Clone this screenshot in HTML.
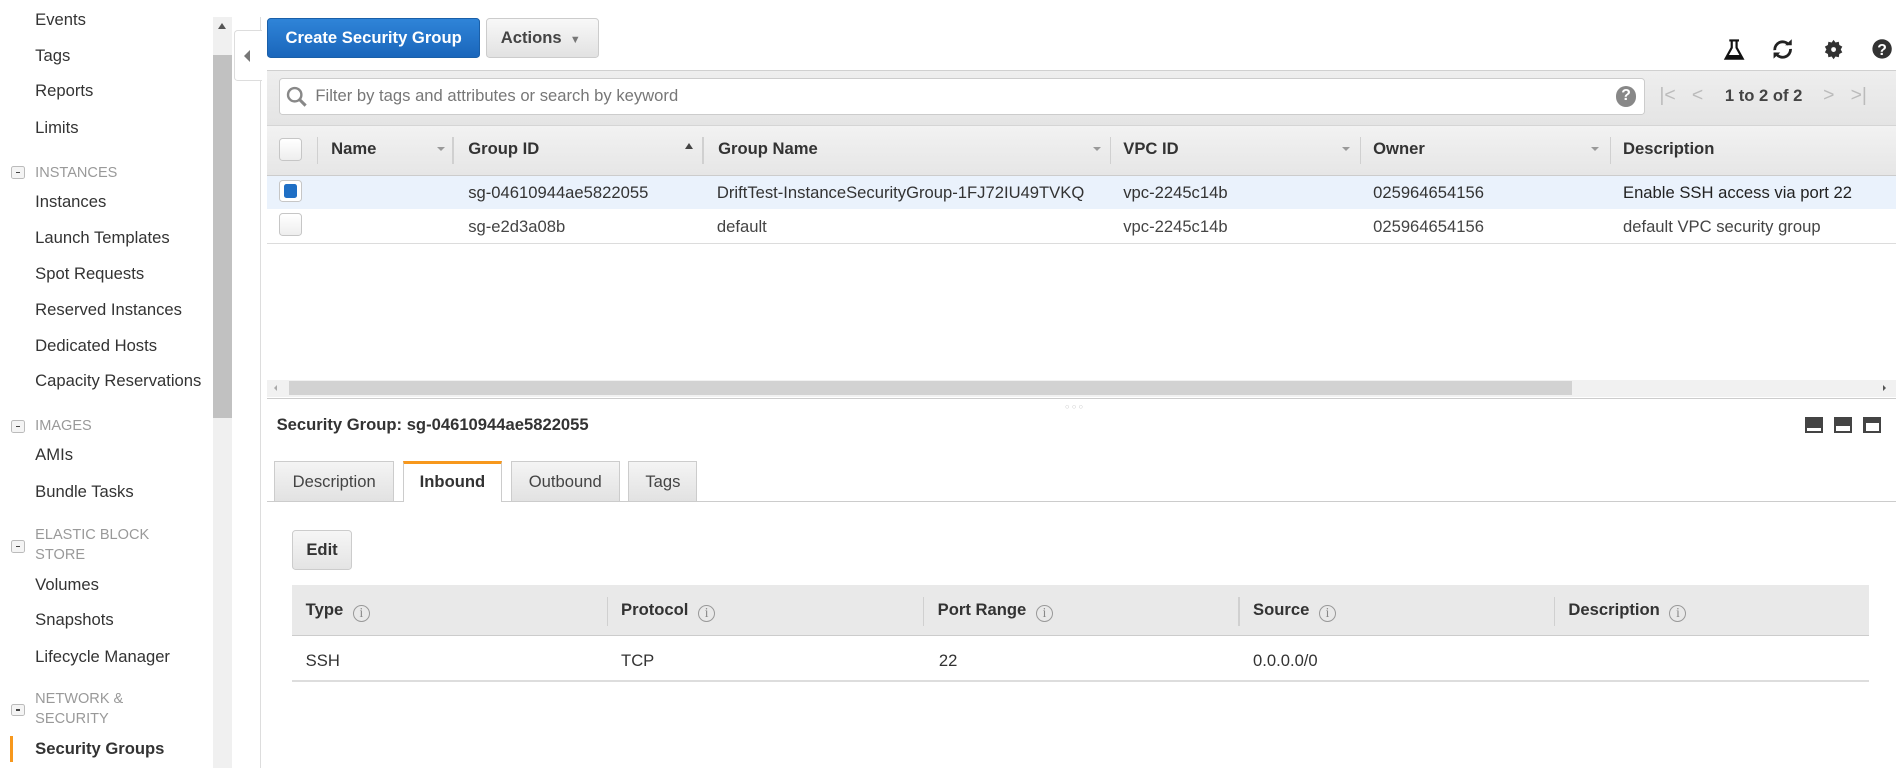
<!DOCTYPE html>
<html><head><meta charset="utf-8"><style>
html,body{margin:0;padding:0;background:#fff;overflow:hidden;width:1902px;height:768px}
#w{zoom:1.213;position:relative;width:1568px;height:633px;font-family:"Liberation Sans",Arial,sans-serif;color:#333;font-size:13.7px}
.a{position:absolute;white-space:nowrap}
.si{left:29px;font-size:13.7px;color:#333}
.sh{left:29px;font-size:12px;color:#999;line-height:16px}
.mb{position:absolute;left:9px;width:10px;height:9px;border:1px solid #bbb;border-radius:2px;background:#f4f4f4}
.mb:after{content:"";position:absolute;left:3px;top:4px;width:4px;height:1px;background:#444}
.hd{font-weight:bold;color:#333;font-size:13.7px}
.sep{position:absolute;width:1px;height:22px;background:#d0d0d0;top:113px}
.dd{position:absolute;top:121px;width:0;height:0;border-left:4px solid transparent;border-right:4px solid transparent;border-top:4px solid #999}
.cb{position:absolute;width:17px;height:17px;border:1px solid #c6c6c6;border-radius:3px;background:linear-gradient(#fff,#eee)}
.tab{position:absolute;top:380px;height:33px;line-height:33px;text-align:center;background:linear-gradient(#f4f4f4,#e2e2e2);border:1px solid #ccc;border-bottom:none;box-sizing:border-box;color:#444}
.info{display:inline-block;width:14px;height:14px;border:1.5px solid #999;border-radius:50%;vertical-align:-1px;margin-left:8px;font-size:11px;line-height:12px;text-align:center;color:#888;font-weight:normal;box-sizing:border-box;font-family:"Liberation Serif",serif}
.li{position:absolute;width:15px;height:13px;background:#444;top:344px}
.li i{position:absolute;left:2px;right:2px;bottom:2px;background:#fff}
</style></head><body><div id="w">
<div class="a si" style="top:8px">Events</div>
<div class="a si" style="top:38px">Tags</div>
<div class="a si" style="top:67px">Reports</div>
<div class="a si" style="top:97px">Limits</div>
<div class="mb" style="top:137px"></div><div class="a sh" style="top:135px">INSTANCES</div>
<div class="a si" style="top:158px">Instances</div>
<div class="a si" style="top:188px">Launch Templates</div>
<div class="a si" style="top:218px">Spot Requests</div>
<div class="a si" style="top:247px">Reserved Instances</div>
<div class="a si" style="top:277px">Dedicated Hosts</div>
<div class="a si" style="top:306px">Capacity Reservations</div>
<div class="mb" style="top:346px"></div><div class="a sh" style="top:344px">IMAGES</div>
<div class="a si" style="top:367px">AMIs</div>
<div class="a si" style="top:397px">Bundle Tasks</div>
<div class="mb" style="top:445px"></div><div class="a sh" style="top:434px">ELASTIC BLOCK<br>STORE</div>
<div class="a si" style="top:474px">Volumes</div>
<div class="a si" style="top:503px">Snapshots</div>
<div class="a si" style="top:533px">Lifecycle Manager</div>
<div class="mb" style="top:580px"></div><div class="a sh" style="top:569px">NETWORK &amp;<br>SECURITY</div>
<div class="a" style="left:8px;top:607px;width:3px;height:21px;background:#f7981d"></div>
<div class="a si" style="top:609px;font-weight:bold">Security Groups</div>
<div class="a" style="left:176px;top:14px;width:15px;height:619px;background:#f0f0f0"></div>
<div class="a" style="left:176px;top:45px;width:15px;height:300px;background:#c1c1c1"></div>
<div class="a" style="left:180px;top:19px;border-left:4px solid transparent;border-right:4px solid transparent;border-bottom:5px solid #555"></div>
<div class="a" style="left:214px;top:14px;width:1px;height:619px;background:#ddd"></div>
<div class="a" style="left:193px;top:25px;width:22px;height:40px;background:#fff;border:1px solid #ddd;border-right:none;border-radius:3px 0 0 3px"></div>
<div class="a" style="left:201px;top:41px;border-top:5px solid transparent;border-bottom:5px solid transparent;border-right:5px solid #777"></div>
<div class="a" style="left:220px;top:15px;width:176px;height:33px;border-radius:3px;background:linear-gradient(#2f84d8,#1a66bb);border:1px solid #1a5fa8;box-sizing:border-box;color:#fff;font-weight:bold;text-align:center;line-height:31px">Create Security Group</div>
<div class="a" style="left:401px;top:15px;width:93px;height:33px;border-radius:3px;background:linear-gradient(#f8f8f8,#e2e2e2);border:1px solid #ccc;box-sizing:border-box;color:#444;font-weight:bold;line-height:31px;padding-left:11px">Actions <span style="font-size:9px;color:#777;margin-left:3px">&#9660;</span></div>
<svg class="a" style="left:1420px;top:31px" width="140" height="20" viewBox="0 0 140 20">
<path d="M6 2h8M8 2v6l-5 9h14l-5-9V2" fill="none" stroke="#111" stroke-width="1.8"/><path d="M4.5 14h11l1.5 3H3z" fill="#111"/>
<path d="M43.5 10a6.5 6.5 0 0 1 11.5-4.5M56.5 9a6.5 6.5 0 0 1-11.5 4.5" fill="none" stroke="#222" stroke-width="2.3"/><path d="M52 6h5.5V1zM48 12h-5.5v5z" fill="#222"/>
<path d="M92 1.5l1.6 2.2 2.7-.6.4 2.7 2.5 1.3-1.3 2.4 1.3 2.4-2.5 1.3-.4 2.7-2.7-.6L92 17.5l-1.6-2.2-2.7.6-.4-2.7-2.5-1.3 1.3-2.4-1.3-2.4 2.5-1.3.4-2.7 2.7.6z" fill="#333"/><circle cx="92" cy="9.5" r="2" fill="#fff"/>
<circle cx="132" cy="9" r="8" fill="#333"/><text x="132" y="14" font-size="13" font-weight="bold" fill="#fff" text-anchor="middle" font-family="Liberation Sans">?</text>
</svg>
<div class="a" style="left:220px;top:58px;width:1343px;height:45px;background:linear-gradient(#eee,#e4e4e4);border-top:1px solid #d0d0d0"></div>
<div class="a" style="left:230px;top:64px;width:1126px;height:31px;background:#fff;border:1px solid #ccc;border-radius:3px;box-sizing:border-box"></div>
<svg class="a" style="left:235px;top:70px" width="20" height="20"><circle cx="8" cy="8" r="5.5" fill="none" stroke="#888" stroke-width="2"/><path d="M12 12l5 5" stroke="#888" stroke-width="2.5"/></svg>
<div class="a" style="left:260px;top:71px;color:#777">Filter by tags and attributes or search by keyword</div>
<div class="a" style="left:1332px;top:71px;width:17px;height:17px;border-radius:50%;background:#888;color:#fff;font-weight:bold;font-size:13px;text-align:center;line-height:17px">?</div>
<div class="a" style="left:1368px;top:69px;color:#bbb;font-size:16px">|&lt;&nbsp;&nbsp;&nbsp;&lt;</div>
<div class="a" style="left:1422px;top:71px;font-weight:bold;color:#444">1 to 2 of 2</div>
<div class="a" style="left:1503px;top:69px;color:#bbb;font-size:16px">&gt;&nbsp;&nbsp;&nbsp;&gt;|</div>
<div class="a" style="left:220px;top:103px;width:1343px;height:42px;background:linear-gradient(#f2f2f2,#e6e6e6);border-top:1px solid #d5d5d5;border-bottom:1px solid #ccc;box-sizing:border-box"></div>
<div class="cb" style="left:230px;top:114px"></div>
<div class="sep" style="left:261px"></div>
<div class="a hd" style="left:273px;top:115px">Name</div><div class="dd" style="left:360px"></div>
<div class="sep" style="left:373px"></div>
<div class="a hd" style="left:386px;top:115px">Group ID</div><div class="a" style="left:565px;top:118px;border-left:4px solid transparent;border-right:4px solid transparent;border-bottom:5px solid #444"></div>
<div class="sep" style="left:579px"></div>
<div class="a hd" style="left:592px;top:115px">Group Name</div><div class="dd" style="left:901px"></div>
<div class="sep" style="left:915px"></div>
<div class="a hd" style="left:926px;top:115px">VPC ID</div><div class="dd" style="left:1106px"></div>
<div class="sep" style="left:1121px"></div>
<div class="a hd" style="left:1132px;top:115px">Owner</div><div class="dd" style="left:1312px"></div>
<div class="sep" style="left:1327px"></div>
<div class="a hd" style="left:1338px;top:115px">Description</div>
<div class="a" style="left:220px;top:145px;width:1343px;height:27px;background:#eaf2fc;border-bottom:1px solid #dcdcdc"></div>
<div class="a" style="left:220px;top:172px;width:1343px;height:28px;background:#fff;border-bottom:1px solid #dcdcdc"></div>
<div class="cb" style="left:230px;top:148px;background:#fff"></div><div class="a" style="left:234px;top:152px;width:11px;height:11px;background:#1f6fc5;border-radius:2px"></div>
<div class="cb" style="left:230px;top:176px"></div>
<div class="a" style="left:386px;top:151px">sg-04610944ae5822055</div>
<div class="a" style="left:591px;top:151px">DriftTest-InstanceSecurityGroup-1FJ72IU49TVKQ</div>
<div class="a" style="left:926px;top:151px">vpc-2245c14b</div>
<div class="a" style="left:1132px;top:151px">025964654156</div>
<div class="a" style="left:1338px;top:151px;color:#222">Enable SSH access via port 22</div>
<div class="a" style="left:386px;top:179px;color:#444">sg-e2d3a08b</div>
<div class="a" style="left:591px;top:179px;color:#444">default</div>
<div class="a" style="left:926px;top:179px;color:#444">vpc-2245c14b</div>
<div class="a" style="left:1132px;top:179px;color:#444">025964654156</div>
<div class="a" style="left:1338px;top:179px;color:#444">default VPC security group</div>
<div class="a" style="left:220px;top:313px;width:1343px;height:14px;background:#f1f1f1"></div>
<div class="a" style="left:238px;top:314px;width:1058px;height:12px;background:#d2d2d2"></div>
<div class="a" style="left:226px;top:317px;border-top:3px solid transparent;border-bottom:3px solid transparent;border-right:3px solid #aaa"></div>
<div class="a" style="left:1552px;top:317px;border-top:3px solid transparent;border-bottom:3px solid transparent;border-left:3px solid #555"></div>
<div class="a" style="left:220px;top:328px;width:1343px;height:1px;background:#ccc"></div>
<div class="a" style="left:878px;top:331px;font-size:6px;color:#bbb;letter-spacing:2px">&#9675;&#9675;&#9675;</div>
<div class="a" style="left:228px;top:342px;font-weight:bold;color:#333">Security Group: sg-04610944ae5822055</div>
<div class="li" style="left:1488px"><i style="height:2px"></i></div>
<div class="li" style="left:1512px"><i style="height:4px"></i></div>
<div class="li" style="left:1536px"><i style="height:6px"></i></div>
<div class="a" style="left:220px;top:413px;width:1343px;height:1px;background:#ccc"></div>
<div class="tab" style="left:226px;width:99px">Description</div>
<div class="tab" style="left:332px;width:82px;background:#fff;border-top:3px solid #f7981d;height:34px;line-height:30px;font-weight:bold;color:#333">Inbound</div>
<div class="tab" style="left:421px;width:90px">Outbound</div>
<div class="tab" style="left:518px;width:57px">Tags</div>
<div class="a" style="left:241px;top:437px;width:49px;height:33px;border:1px solid #ccc;border-radius:3px;box-sizing:border-box;background:linear-gradient(#f6f6f6,#e4e4e4);font-weight:bold;text-align:center;line-height:31px;color:#333">Edit</div>
<div class="a" style="left:241px;top:482px;width:1300px;height:42px;background:#e9e9e9;border-bottom:1px solid #ccc;box-sizing:border-box"></div>
<div class="a" style="left:500px;top:492px;width:1px;height:24px;background:#d0d0d0"></div>
<div class="a" style="left:761px;top:492px;width:1px;height:24px;background:#d0d0d0"></div>
<div class="a" style="left:1021px;top:492px;width:1px;height:24px;background:#d0d0d0"></div>
<div class="a" style="left:1281px;top:492px;width:1px;height:24px;background:#d0d0d0"></div>
<div class="a hd" style="left:252px;top:495px">Type<span class="info">i</span></div>
<div class="a hd" style="left:512px;top:495px">Protocol<span class="info">i</span></div>
<div class="a hd" style="left:773px;top:495px">Port Range<span class="info">i</span></div>
<div class="a hd" style="left:1033px;top:495px">Source<span class="info">i</span></div>
<div class="a hd" style="left:1293px;top:495px">Description<span class="info">i</span></div>
<div class="a" style="left:241px;top:561px;width:1300px;height:1px;background:#ddd"></div>
<div class="a" style="left:252px;top:537px">SSH</div>
<div class="a" style="left:512px;top:537px">TCP</div>
<div class="a" style="left:774px;top:537px">22</div>
<div class="a" style="left:1033px;top:537px">0.0.0.0/0</div>
</div></body></html>
